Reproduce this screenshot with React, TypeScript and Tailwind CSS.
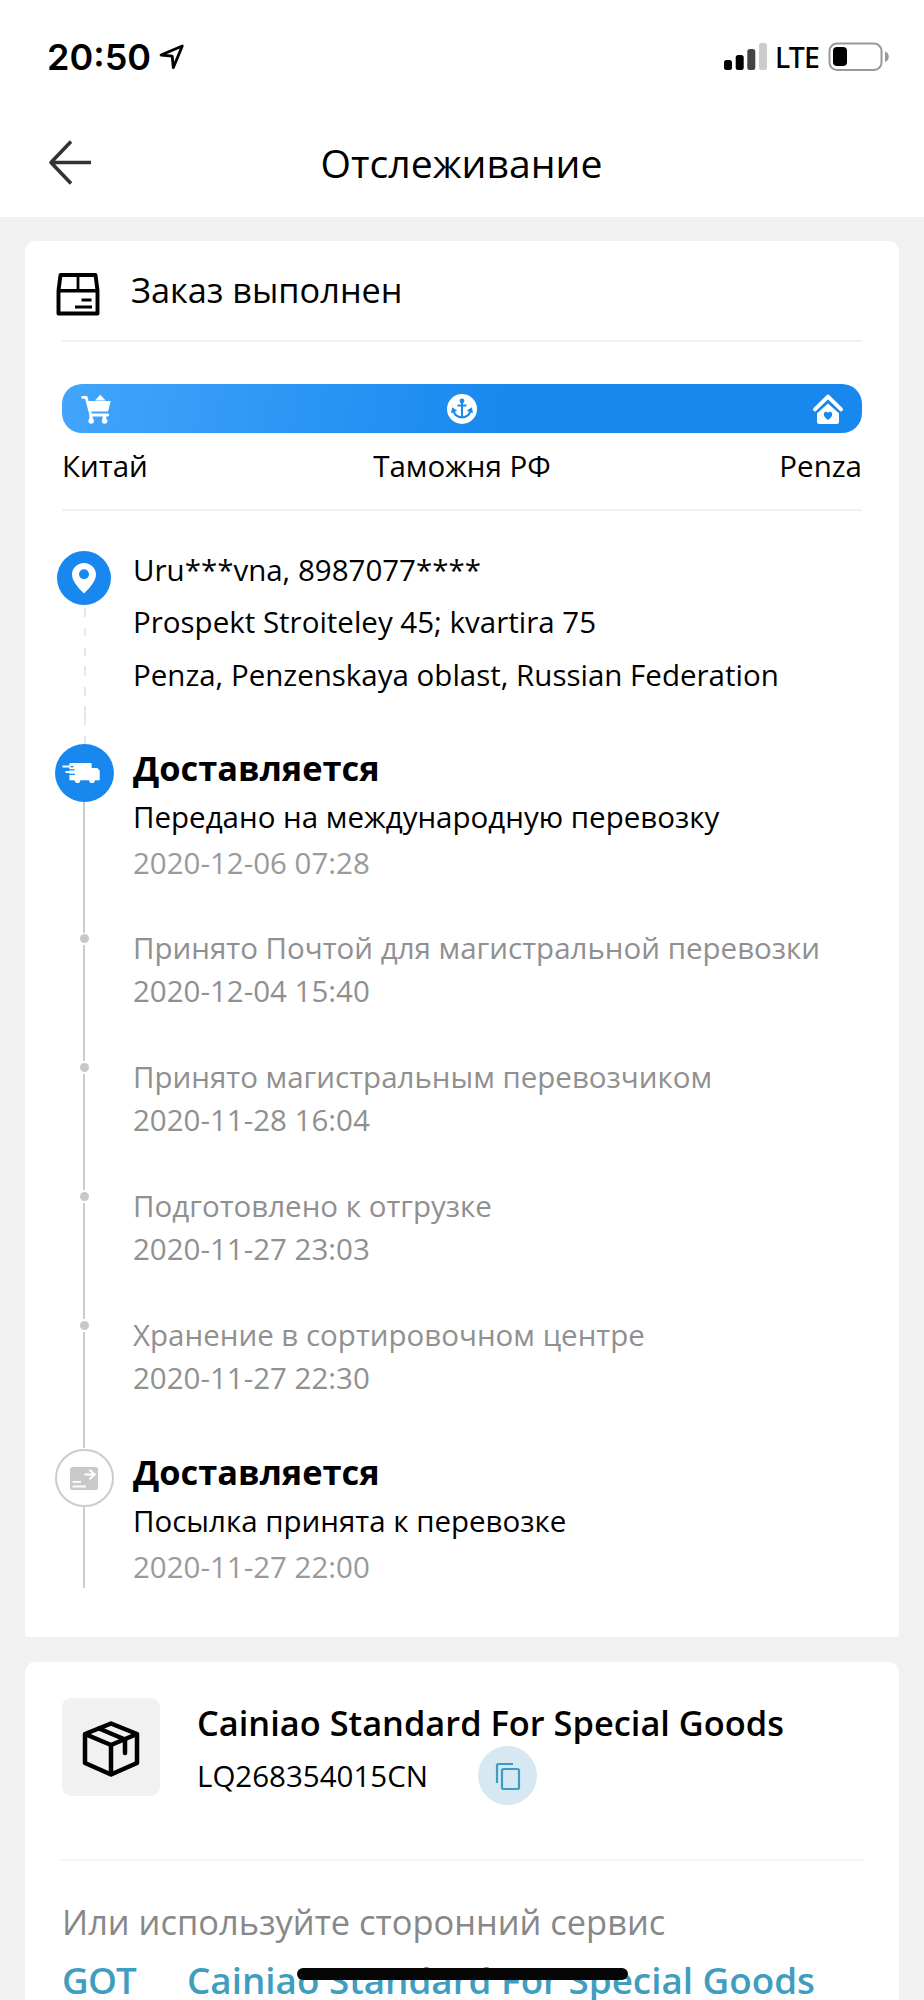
import type { ReactNode } from "react";

type Checkpoint = {
	title: string;
	date: string;
};

const ADDRESS = [
	"Uru***vna, 8987077****",
	"Prospekt Stroiteley 45; kvartira 75",
	"Penza, Penzenskaya oblast, Russian Federation",
];

const CHECKPOINTS: Checkpoint[] = [
	{ title: "Принято Почтой для магистральной перевозки", date: "2020-12-04 15:40" },
	{ title: "Принято магистральным перевозчиком", date: "2020-11-28 16:04" },
	{ title: "Подготовлено к отгрузке", date: "2020-11-27 23:03" },
	{ title: "Хранение в сортировочном центре", date: "2020-11-27 22:30" },
];

const StatusBar = () => (
	<div className="flex h-[113px] items-start justify-between pr-[34px] pl-[47px]">
		<div className="flex pt-[35px]">
			<span className="font-['Inter'] font-semibold text-[36px] leading-[44px]">20:50</span>
			<svg className="mt-[9px] ml-[8px] h-[26px] w-[26px]" viewBox="0 0 26 26" fill="none" aria-hidden="true">
				<path
					d="M23.3 2 L2 11 L13.2 12.2 L14.3 23.6 Z"
					stroke="#000"
					strokeWidth="2.8"
					strokeLinejoin="round"
				/>
			</svg>
		</div>
		<div className="flex pt-[42px]">
			<svg className="h-[29px] w-[44px]" viewBox="0 0 44 29" aria-hidden="true">
				<rect x="0" y="18" width="8" height="10" rx="2.5" fill="#000" />
				<rect x="11.7" y="13" width="8" height="15" rx="2.5" fill="#000" />
				<rect x="23.3" y="7" width="8" height="21" rx="2.5" fill="#444" />
				<rect x="35" y="1" width="8" height="27" rx="2.5" fill="#ccc" />
			</svg>
			<span className="-mt-[5px] ml-[7px] w-[46px] font-['Noto_Sans'] font-medium text-[28.5px] leading-[40px] tracking-[-0.8px]">LTE</span>
			<svg className="ml-[7px] h-[30px] w-[62px]" viewBox="0 0 62 30" aria-hidden="true">
				<rect x="1.5" y="1.5" width="52" height="26.5" rx="7.5" fill="none" stroke="#999" strokeWidth="2" />
				<rect x="5" y="5" width="14" height="19" rx="4" fill="#000" />
				<path d="M57 9.5c5 1.5 5 9 0 10.5z" fill="#999" />
			</svg>
		</div>
	</div>
);

const Header = () => (
	<header className="flex h-[104px] items-start px-[48px]">
		<svg className="mt-[26px] h-[46px] w-[44px]" viewBox="0 0 44 46" fill="none" aria-hidden="true">
			<path d="M23 2.5 L3 23.5 L23 44.5 M3 23.5 H43" stroke="#333" strokeWidth="3.6" strokeLinejoin="round" />
		</svg>
		<h1 className="mr-[45px] flex-1 pt-[24px] text-center text-[39.2px] leading-[52px]">Отслеживание</h1>
	</header>
);

const CartIcon = () => (
	<svg className="h-[32px] w-[32px]" viewBox="0 0 32 32" fill="#fff" aria-hidden="true">
		<path d="M2.6 4.4h3.6l4.6 17.6h17" fill="none" stroke="#fff" strokeWidth="2.8" strokeLinecap="round" strokeLinejoin="round" />
		<path d="M6.5 8h24.2l-2.6 10.6H9z" />
		<path d="M15 7.4l5.2-5.6 5.4 5.6z" />
		<circle cx="11.2" cy="28" r="2.8" />
		<circle cx="24.6" cy="28" r="2.8" />
		<path d="M9.4 22.3h3.2v4H9.4zM22.6 22.3h3.6v4h-3.6z" />
	</svg>
);

const AnchorIcon = () => (
	<svg className="h-[32px] w-[32px]" viewBox="0 0 32 32" fill="none" aria-hidden="true">
		<circle cx="16" cy="16" r="15" fill="#fff" />
		<g stroke="#1a89ee" strokeWidth="2">
			<circle cx="16" cy="8" r="1.7" fill="#1a89ee" strokeWidth="1.4" />
			<path d="M16 8v16.5M11.5 12.4h9M7.6 17.5c.6 4.2 4.4 6.6 8.4 7 4-.4 7.8-2.8 8.4-7" />
		</g>
		<path d="M5 20.2l1.2-6 5 3.6zM27 20.2l-1.2-6-5 3.6z" fill="#1a89ee" />
	</svg>
);

const HouseIcon = () => (
	<svg className="h-[32px] w-[32px]" viewBox="0 0 32 32" aria-hidden="true">
		<path d="M16 10.4 L27 20.2 V29 a2 2 0 0 1-2 2 H7 a2 2 0 0 1-2-2 V20.2z" fill="#fff" />
		<path d="M3 16.4 L16 3.6 L29 16.4" fill="none" stroke="#fff" strokeWidth="4" strokeLinecap="round" strokeLinejoin="round" />
		<path d="M4.4 19 L16 8 L27.6 19" fill="none" stroke="#1888ee" strokeWidth="1.5" />
		<path d="M16 27c-2.6-2-4.2-3.6-4.2-5.8 0-2.9 3.2-3.4 4.2-1.2 1-2.2 4.2-1.7 4.2 1.2 0 2.2-1.6 3.8-4.2 5.8z" fill="#1888ee" />
	</svg>
);

const TruckBadge = () => (
	<svg className="h-[58px] w-[59px] shrink-0" viewBox="0 0 59 58" aria-hidden="true">
		<ellipse cx="29.5" cy="29" rx="29.5" ry="29" fill="#1888ee" />
		<g fill="#fff">
			<path d="M15.4 19h20a1.3 1.3 0 0 1 1.3 1.3V24h5.5l2.5 2.5V36.3H14.4V20a1 1 0 0 1 1-1z" />
			<circle cx="22.5" cy="36.3" r="2.8" />
			<circle cx="37" cy="36.3" r="2.8" />
		</g>
		<path d="M13 22.7h5.5M12.5 25.8h7M13 30.4h7" stroke="#1888ee" strokeWidth="1.3" />
		<path d="M7.5 22.5h8M10.5 28h12" stroke="#fff" strokeWidth="2" />
	</svg>
);

const Stage = ({ icon, children, title, date, last }: { icon: ReactNode; children?: ReactNode; title: string; date: string; last?: boolean }) => (
	<li className={last ? "flex h-[138px]" : "flex h-[190px]"}>
		<div className="mr-[19px] flex w-[60px] shrink-0 flex-col items-center">
			{icon}
			<div className={last ? "w-[2px] flex-1 bg-[#ccc]" : "mb-px w-[2px] flex-1 bg-[#ccc]"} />
		</div>
		<div className={last ? "-mt-[1.5px]" : "pt-[0.5px]"}>
			<h2 className="mb-[4px] font-bold text-[34.4px] leading-[45px]">{title}</h2>
			<p className="leading-[46px]">{children}</p>
			<p className="text-[#9a9a9a] leading-[46px]">{date}</p>
		</div>
	</li>
);

const Timeline = () => (
	<ol className="-ml-[8px] mt-[32px]">
		<li className="flex h-[201px]">
			<div className="mr-[19px] flex w-[60px] shrink-0 flex-col items-center pt-[8px]">
				<div className="flex h-[54px] w-[54px] shrink-0 items-center justify-center rounded-full bg-[#1888ee]">
					<svg className="h-[32px] w-[26px]" viewBox="0 0 26 32" aria-hidden="true">
						<path
							d="M13 1C6.4 1 1 6.2 1 12.6 1 20.5 10.5 29 13 31.5 15.5 29 25 20.5 25 12.6 25 6.2 19.6 1 13 1z"
							fill="#fff"
						/>
						<circle cx="13" cy="12.3" r="5" fill="#1888ee" />
					</svg>
				</div>
				<svg className="ml-[2px] h-[139px] w-[2px]" viewBox="0 0 2 139" aria-hidden="true">
					<path d="M1 3v9M1 23v8M1 43v8M1 61v10M1 82v9M1 101v19M1 131v8" stroke="#e8e8e8" strokeWidth="2" />
				</svg>
			</div>
			<div className="pt-[0.5px] leading-[52.5px]">
				{ADDRESS.map((line) => (
					<p key={line}>{line}</p>
				))}
			</div>
		</li>
		<Stage title="Доставляется" date="2020-12-06 07:28" icon={<TruckBadge />}>
			Передано на международную перевозку
		</Stage>
		{CHECKPOINTS.map((item) => (
			<li key={item.date} className="flex h-[129px]">
				<div className="mr-[19px] flex w-[60px] shrink-0 flex-col items-center">
					<div className="h-[9px] w-[9px] rounded-full bg-[#c8c8c8]" />
					<div className="my-[2px] w-[2px] flex-1 bg-[#ccc]" />
				</div>
				<div className="-mt-[8px] text-[#909090] leading-[43px]">
					<p>{item.title}</p>
					<p>{item.date}</p>
				</div>
			</li>
		))}
		<Stage
			last
			title="Доставляется"
			date="2020-11-27 22:00"
			icon={
				<div className="-mt-px flex h-[58px] w-[59px] shrink-0 items-center justify-center rounded-full border-2 border-[#ccc]">
					<svg className="h-[24px] w-[28px]" viewBox="0 0 28 24" fill="none" aria-hidden="true">
						<rect x="0" y="1" width="28" height="23" rx="2.5" fill="#c9c9c9" />
						<path d="M14.5 8.5h10.5M19.5 3.8l5.2 4.7-5.2 4.7" stroke="#fff" strokeWidth="2" />
						<path d="M2.5 15.8h8.5M2.5 20.5h13.5" stroke="#fff" strokeWidth="1.8" />
					</svg>
				</div>
			}
		>
			Посылка принята к перевозке
		</Stage>
	</ol>
);

const OrderCard = () => (
	<section className="h-[1396px] rounded-t-[10px] rounded-b-[2px] bg-white px-[37px]">
		<div className="-ml-[6px] flex h-[99px] items-start">
			<svg className="mt-[31px] h-[44px] w-[44px]" viewBox="0 0 44 44" fill="none" stroke="#000" aria-hidden="true">
				<path d="M4.5 3h35l2 15.5V41.5h-39V18.5z" strokeWidth="3.9" strokeLinejoin="round" />
				<path d="M3 18.7h38" strokeWidth="3.4" />
				<path d="M22 3v15" strokeWidth="2.8" />
				<path d="M25.5 28h10M19 35h17" strokeWidth="3.2" />
			</svg>
			<h2 className="ml-[31px] pt-[25px] text-[34.3px] leading-[48px]">Заказ выполнен</h2>
		</div>
		<div className="h-[2px] bg-[#f1f1f1]" />
		<div className="mt-[42px] flex h-[49px] items-center justify-between rounded-[20px] bg-[linear-gradient(100deg,#42a5fb_0%,#1888ee_56%)] px-[18px]">
			<CartIcon />
			<AnchorIcon />
			<HouseIcon />
		</div>
		<div className="grid grid-cols-3 pt-[10px] leading-[46px]">
			<span>Китай</span>
			<span className="text-center">Таможня РФ</span>
			<span className="text-right">Penza</span>
		</div>
		<div className="mt-[20px] h-[2px] bg-[#f1f1f1]" />
		<Timeline />
	</section>
);

const CarrierCard = () => (
	<section className="mt-[25px] h-[400px] rounded-t-[10px] bg-white px-[37px] pt-[36px]">
		<div className="flex h-[160px]">
			<div className="flex h-[98px] w-[98px] items-center justify-center rounded-[9px] bg-[#f1f1f1]">
				<svg className="mt-[3px] h-[58px] w-[58px]" viewBox="0 0 58 58" fill="none" stroke="#000" strokeWidth="4.5" strokeLinejoin="round" aria-hidden="true">
					<path d="M29 3.5 55 14v29L29 54.5 3 43V14z" />
					<path d="M3 14l26 11L55 14M29 25v29" />
					<path d="M17 8.5l26 11V33" strokeLinecap="round" />
				</svg>
			</div>
			<div className="ml-[37px]">
				<h2 className="whitespace-nowrap pt-px font-semibold text-[34.4px] leading-[48px]">Cainiao Standard For Special Goods</h2>
				<div className="-mt-px flex items-start">
					<span className="w-[229px] pt-[7px] leading-[46px]">LQ268354015CN</span>
					<button type="button" aria-label="Скопировать" className="ml-[52px] flex h-[59px] w-[59px] items-center justify-center rounded-full bg-[#d6e9f2]">
						<svg className="h-[28px] w-[26px]" viewBox="0 0 26 28" fill="none" stroke="#3d9cc0" strokeWidth="2.2" aria-hidden="true">
							<rect x="7" y="7" width="17" height="20" rx="1.5" />
							<path d="M2 21V3.5A1.5 1.5 0 0 1 3.5 2H18" />
						</svg>
					</button>
				</div>
			</div>
		</div>
		<div className="-mx-[2px] mt-px h-[2px] bg-[#f5f5f5]" />
		<p className="mt-[37px] text-[#888] text-[34.4px] leading-[48px]">Или используйте сторонний сервис</p>
		<p className="mt-[9px] flex whitespace-nowrap font-semibold text-[#3f9dbf] text-[36.8px] leading-[50px]">
			<span className="w-[125px] tracking-[-0.8px]">GOT</span>
			<span>Cainiao Standard For Special Goods</span>
		</p>
	</section>
);

export default function App() {
	return (
		<div className="relative h-[2000px] w-[924px] overflow-hidden bg-[#f1f1f1] font-['Open_Sans','Noto_Sans',sans-serif] text-[29.5px] text-black">
			<div className="bg-white">
				<StatusBar />
				<Header />
			</div>
			<main className="px-[25px] pt-[24px]">
				<OrderCard />
				<CarrierCard />
			</main>
			<div className="absolute bottom-[20px] left-[297px] h-[12px] w-[331px] rounded-full bg-[#060606]" />
		</div>
	);
}
